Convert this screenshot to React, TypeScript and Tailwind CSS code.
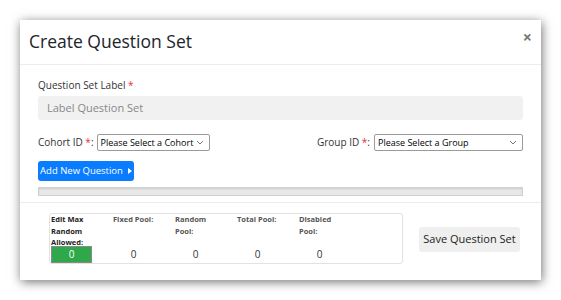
import React from 'react';

const stats = [
  { label: 'Edit Max Random Allowed:', value: 0, edit: true },
  { label: 'Fixed Pool:', value: 0 },
  { label: 'Random Pool:', value: 0 },
  { label: 'Total Pool:', value: 0 },
  { label: 'Disabled Pool:', value: 0 },
];

const Chevron = () => (
  <svg width="8" height="5" viewBox="0 0 8 5" className="text-[#777] shrink-0">
    <path d="M1 1l3 3 3-3" fill="none" stroke="currentColor" strokeWidth="1" />
  </svg>
);

const FakeSelect: React.FC<{ text: string; width: string }> = ({ text, width }) => (
  <div className={`${width} h-[17px] flex items-center justify-between border border-[#9a9a9a] rounded-[2px] pl-[3px] pr-[5px] bg-white`}>
    <span className="text-[9px] text-black leading-none whitespace-nowrap">{text}</span>
    <Chevron />
  </div>
);

const App: React.FC = () => {
  return (
    <div className="w-[561px] h-[300px] bg-white pt-[20px] pl-[20px]" style={{ fontFamily: '"Open Sans", "Noto Sans", sans-serif' }}>
      <div className="w-[521px] h-[260px] bg-white flex flex-col shadow-[1px_2px_10px_rgba(0,0,0,0.55)]">
        {/* Header */}
        <div className="h-[45px] flex items-center justify-between pl-[9px] pr-[9px] border-b border-[#ececec]">
          <h1 className="text-[17.5px] text-[#212529] leading-none">Create Question Set</h1>
          <span className="text-[16px] font-bold text-[#777] leading-none -mt-[10px]">×</span>
        </div>

        {/* Body */}
        <div className="px-[18px] pt-[13px] pb-[6px] border-b border-[#ececec]">
          <div className="text-[10px] text-[#333] leading-[14px]">
            Question Set Label <span className="text-[#e3342f]">*</span>
          </div>
          <div className="mt-[4px] h-[24px] rounded-[3px] bg-[#f1f1f1] flex items-center pl-[9px] text-[11px] text-[#888]">
            Label Question Set
          </div>

          <div className="mt-[14px] flex items-center justify-between">
            <div className="flex items-center gap-[3px]">
              <span className="text-[10px] text-[#333] whitespace-nowrap">
                Cohort ID <span className="text-[#e3342f]">*</span>:
              </span>
              <FakeSelect text="Please Select a Cohort" width="w-[113px]" />
            </div>
            <div className="flex items-center gap-[4px]">
              <span className="text-[10px] text-[#333] whitespace-nowrap">
                Group ID <span className="text-[#e3342f]">*</span>:
              </span>
              <FakeSelect text="Please Select a Group" width="w-[149px]" />
            </div>
          </div>

          <button className="mt-[10px] h-[20px] w-[96px] rounded-[3px] bg-[#0a7cff] text-white text-[9.5px] whitespace-nowrap flex items-center justify-center gap-[5px]">
            Add New Question
            <svg width="4" height="6" viewBox="0 0 4 6" className="shrink-0"><path d="M0 0l4 3-4 3z" fill="white" /></svg>
          </button>

          <div className="mt-[6px] h-[9px] bg-[#e8e8e8] border border-[#d2d2d2] shadow-[inset_0_1px_2px_rgba(0,0,0,0.12)]" />
        </div>

        {/* Footer */}
        <div className="flex-1 flex items-start pt-[10px] pl-[29px] pr-[21px] justify-between">
          <div className="w-[354px] h-[51px] border border-[#e2e2e2] rounded-[3px] flex gap-[21px] pl-[1px]">
            {stats.map((s) => (
              <div key={s.label} className="w-[41px] flex flex-col">
                <div className={`text-[7.5px] leading-[11.5px] font-bold h-[32px] ${s.edit ? 'text-[#222]' : 'text-[#555]'}`}>
                  {s.label}
                </div>
                {s.edit ? (
                  <div className="h-[17px] w-[41px] bg-[#2ea84a] border border-[#8a8a8a] text-white text-[10px] flex items-center justify-center">
                    {s.value}
                  </div>
                ) : (
                  <div className="h-[17px] w-[41px] text-[#333] text-[10px] flex items-center justify-center">{s.value}</div>
                )}
              </div>
            ))}
          </div>
          <button className="mt-[14px] w-[101px] h-[25px] rounded-[3px] bg-[#efefef] text-[11px] text-[#222] whitespace-nowrap">Save Question Set</button>
        </div>
      </div>
    </div>
  );
};

export default App;
